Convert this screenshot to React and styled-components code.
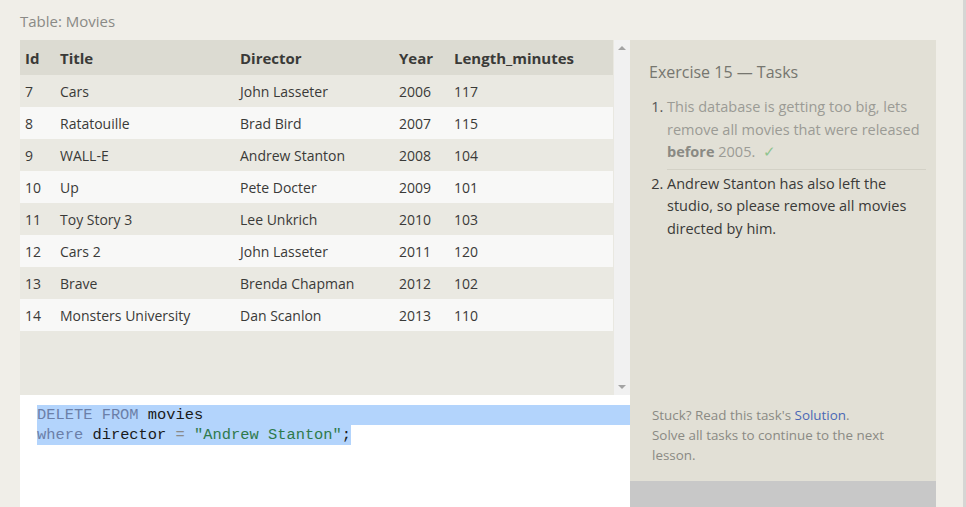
import React from 'react';
import styled, { createGlobalStyle } from 'styled-components';

const GlobalStyle = createGlobalStyle`
  html, body {
    margin: 0;
    padding: 0;
    background: #f0eee8;
    font-family: "Open Sans", "Liberation Sans", sans-serif;
    overflow: hidden;
  }
`;

const Page = styled.div`
  height: 507px;
  box-sizing: border-box;
  padding: 10px 0 0 20px;
  border-right: 3px solid #d6d6d4;
  overflow: hidden;
`;

const Caption = styled.div`
  font-size: 15px;
  color: #8a8a86;
  height: 30px;
  line-height: 22px;
`;

const Layout = styled.div`
  display: grid;
  grid-template-columns: 610px 306px;
  align-items: start;
`;

const LeftColumn = styled.div`
  display: flex;
  flex-direction: column;
`;

const TableFrame = styled.div`
  display: flex;
  height: 355px;
  background: #e9e8e1;
`;

const TableScroll = styled.div`
  flex: 1;
  overflow: hidden;
`;

const Table = styled.table`
  width: 593px;
  border-collapse: collapse;
  font-size: 14px;
  color: #3a3a38;
`;

const HeadCell = styled.th`
  text-align: left;
  font-weight: 700;
  font-size: 15px;
  height: 35px;
  padding: 0 5px;
  background: #dcdbd2;
  color: #3a3a38;
  width: ${(p) => p.w}px;
  box-sizing: border-box;
`;

const Row = styled.tr`
  background: ${(p) => (p.odd ? '#eae9e2' : '#f8f8f7')};
`;

const Cell = styled.td`
  height: 32px;
  padding: 0 5px;
  box-sizing: border-box;
`;

const Scrollbar = styled.div`
  width: 16px;
  background: #f1f1f1;
  display: flex;
  flex-direction: column;
  justify-content: space-between;
  align-items: center;
  padding: 6px 0;
  box-sizing: border-box;
`;

const Arrow = styled.div`
  width: 0;
  height: 0;
  border-left: 4px solid transparent;
  border-right: 4px solid transparent;
  ${(p) =>
    p.down ? 'border-top: 4px solid #a3a3a3;' : 'border-bottom: 4px solid #a3a3a3;'}
`;

const Editor = styled.div`
  background: #ffffff;
  height: 120px;
  padding: 10px 0 0 17px;
  box-sizing: border-box;
  font-family: "Liberation Mono", "DejaVu Sans Mono", monospace;
  font-size: 15.4px;
  line-height: 20px;
  color: #1a1a1a;
`;

const CodeLine = styled.div`
  background: ${(p) => (p.full ? '#b3d4fc' : 'transparent')};
  white-space: pre;
`;

const Selected = styled.span`
  background: #b3d4fc;
  display: inline-block;
`;

const Keyword = styled.span`
  color: #6b7fa8;
`;

const Op = styled.span`
  color: #8a8a8a;
`;

const Str = styled.span`
  color: #2f7a4c;
`;

const Panel = styled.div`
  background: #e2e0d6;
  height: 441px;
  display: flex;
  flex-direction: column;
  position: relative;
`;

const PanelBody = styled.div`
  flex: 1;
  padding: 21px 10px 0 19px;
`;

const PanelTitle = styled.div`
  font-size: 16px;
  color: #76766f;
  font-weight: 400;
  margin-bottom: 13px;
`;

const TaskList = styled.ol`
  margin: 0;
  padding: 0 0 0 18px;
  font-size: 14.5px;
  line-height: 22.5px;
`;

const Task = styled.li`
  color: ${(p) => (p.done ? '#9b9b95' : '#3a3a38')};
  padding-bottom: ${(p) => (p.done ? '5px' : '0')};
  padding-top: ${(p) => (p.done ? '0' : '3px')};
  border-bottom: ${(p) => (p.done ? '1px solid #d3d1c6' : 'none')};
  &::marker {
    color: ${(p) => (p.done ? '#555' : '#3a3a38')};
  }
  b {
    color: #8a8a84;
  }
`;

const Check = styled.span`
  color: #8fc48f;
  margin-left: 8px;
`;

const Hint = styled.div`
  padding: 0 50px 16px 22px;
  font-size: 13.4px;
  line-height: 20px;
  color: #8a8a84;
`;

const SolutionLink = styled.a`
  color: #4a68b5;
  text-decoration: none;
`;

const NextButton = styled.div`
  position: absolute;
  left: 0;
  right: 0;
  top: 441px;
  height: 40px;
  background: #c8c8c8;
  color: #ffffff;
  font-weight: 700;
  font-size: 16px;
  text-align: center;
  padding-top: 21px;
`;

const columns = [
  { key: 'id', label: 'Id', w: 35 },
  { key: 'title', label: 'Title', w: 180 },
  { key: 'director', label: 'Director', w: 159 },
  { key: 'year', label: 'Year', w: 55 },
  { key: 'length', label: 'Length_minutes', w: 164 },
];

const movies = [
  [7, 'Cars', 'John Lasseter', 2006, 117],
  [8, 'Ratatouille', 'Brad Bird', 2007, 115],
  [9, 'WALL-E', 'Andrew Stanton', 2008, 104],
  [10, 'Up', 'Pete Docter', 2009, 101],
  [11, 'Toy Story 3', 'Lee Unkrich', 2010, 103],
  [12, 'Cars 2', 'John Lasseter', 2011, 120],
  [13, 'Brave', 'Brenda Chapman', 2012, 102],
  [14, 'Monsters University', 'Dan Scanlon', 2013, 110],
];

export default function App() {
  return (
    <Page>
      <GlobalStyle />
      <Caption>Table: Movies</Caption>
      <Layout>
        <LeftColumn>
          <TableFrame>
            <TableScroll>
              <Table>
                <thead>
                  <tr>
                    {columns.map((c) => (
                      <HeadCell key={c.key} w={c.w}>{c.label}</HeadCell>
                    ))}
                  </tr>
                </thead>
                <tbody>
                  {movies.map((m, i) => (
                    <Row key={m[0]} odd={i % 2 === 0}>
                      {m.map((v, j) => (
                        <Cell key={j}>{v}</Cell>
                      ))}
                    </Row>
                  ))}
                </tbody>
              </Table>
            </TableScroll>
            <Scrollbar>
              <Arrow />
              <Arrow down />
            </Scrollbar>
          </TableFrame>
          <Editor>
            <CodeLine full>
              <Keyword>DELETE FROM</Keyword> movies
            </CodeLine>
            <CodeLine>
              <Selected>
                <Keyword>where</Keyword> director <Op>=</Op> <Str>"Andrew Stanton"</Str>;
              </Selected>
            </CodeLine>
          </Editor>
        </LeftColumn>
        <Panel>
          <PanelBody>
            <PanelTitle>Exercise 15 — Tasks</PanelTitle>
            <TaskList>
              <Task done>
                This database is getting too big, lets remove all movies that were released{' '}
                <b>before</b> 2005.<Check>✓</Check>
              </Task>
              <Task>
                Andrew Stanton has also left the studio, so please remove all movies directed by him.
              </Task>
            </TaskList>
          </PanelBody>
          <Hint>
            Stuck? Read this task's <SolutionLink>Solution</SolutionLink>.
            <br />
            Solve all tasks to continue to the next lesson.
          </Hint>
          <NextButton>Continue to the next lesson</NextButton>
        </Panel>
      </Layout>
    </Page>
  );
}
